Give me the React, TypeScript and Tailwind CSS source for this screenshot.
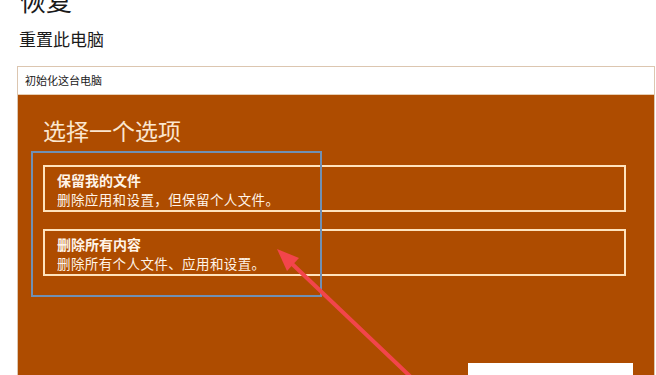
const font = { fontFamily: '"Noto Sans CJK SC", "Noto Sans", sans-serif' };

const options = [
  { title: "保留我的文件", desc: "删除应用和设置，但保留个人文件。" },
  { title: "删除所有内容", desc: "删除所有个人文件、应用和设置。" },
];

export default function App() {
  return (
    <div className="relative w-[656px] h-[375px] overflow-hidden bg-white text-[#1a1a1a]" style={font}>
      <div className="pl-[20px] -mt-[13px] text-[26px] leading-[26px]">恢复</div>
      <div className="pl-[19px] mt-[16px] text-[17px] leading-[20px]">重置此电脑</div>

      <div className="ml-[17px] mt-[17px] w-[638px] border border-[#dcc6b0] flex flex-col">
        <div className="h-[28px] flex items-center pl-[7px] text-[11px] bg-white border-b border-[#e7cfb4]">
          初始化这台电脑
        </div>
        <div className="bg-[#ae4c00] h-[300px] pt-[22px] pl-[25px] flex flex-col">
          <div className="text-[23px] leading-[26px] text-[#fbe6cf]">选择一个选项</div>
          <div className="mt-[22px] flex flex-col gap-[17px]">
            {options.map((o) => (
              <div key={o.title} className="w-[583px] h-[47px] border-2 border-[#ffe3bd] pl-[12px] pt-[4px] text-[#fff4e8]">
                <div className="text-[14px] leading-[19px] font-bold">{o.title}</div>
                <div className="text-[13.5px] leading-[19px] tracking-[0.4px]">{o.desc}</div>
              </div>
            ))}
          </div>
          <div className="mt-[87px] flex justify-end pr-[21px]">
            <div className="w-[165px] h-[40px] bg-white" />
          </div>
        </div>
      </div>

      {/* annotation */}
      <div className="absolute left-[31px] top-[151px] w-[291px] h-[146px] border-2 border-[#7090b4]" />
      <svg className="absolute inset-0" width="656" height="375" viewBox="0 0 656 375">
        <line x1="414" y1="380" x2="288" y2="260" stroke="#f2454b" strokeWidth="4" strokeLinecap="round" />
        <polygon points="277,249 299,258 287,271" fill="#f2454b" />
      </svg>
    </div>
  );
}
